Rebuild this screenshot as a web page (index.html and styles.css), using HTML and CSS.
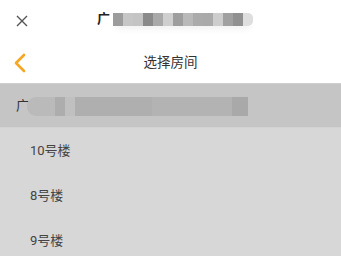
FILE: index.html
```html
<!DOCTYPE html>
<html>
<head>
<meta charset="utf-8">
<link rel="stylesheet" href="styles.css">
</head>
<body>
<div class="app">
  <header class="topbar">
    <svg class="close" width="12" height="12" viewBox="0 0 12 12"><path d="M1 1L11 11M11 1L1 11" stroke="#555" stroke-width="1.4" fill="none"/></svg>
    <div class="toptitle">
      <span class="ch">广</span>
      <span class="mosaic"><i></i><i></i><i></i><i></i><i></i><i></i><i></i><i></i><i></i><i></i><i></i><i></i><i></i><i></i></span>
    </div>
  </header>
  <nav class="navbar">
    <svg class="back" width="14" height="20" viewBox="0 0 14 20"><path d="M11 2L3 10L11 18" stroke="#f5a623" stroke-width="2.6" fill="none" stroke-linecap="round" stroke-linejoin="round"/></svg>
    <div class="navtitle">选择房间</div>
  </nav>
  <div class="selected">
    <span class="ch2">广</span>
    <span class="blur"><i class="b1"></i><i class="b2"></i><i class="b3"></i><i class="b4"></i><i class="b5"></i><i class="b6"></i></span>
  </div>
  <ul class="list">
    <li>10号楼</li>
    <li>8号楼</li>
    <li>9号楼</li>
  </ul>
</div>
</body>
</html>
```
FILE: styles.css
```css
html, body {
  margin: 0;
  padding: 0;
  background: #d7d7d7;
  font-family: Roboto, "Noto Sans CJK SC", sans-serif;
}
.app {
  width: 341px;
  height: 256px;
  overflow: hidden;
  display: flex;
  flex-direction: column;
}
.app > * {
  flex-shrink: 0;
}
.topbar {
  height: 40px;
  background: #fff;
  display: flex;
  align-items: center;
  position: relative;
}
.close {
  margin-left: 16px;
  margin-top: 2px;
}
.toptitle {
  margin-left: 69px;
  display: flex;
  align-items: flex-start;
  height: 24px;
  margin-top: 6px;
}
.ch {
  font-size: 13px;
  line-height: 16px;
  color: #222;
  font-weight: bold;
  width: 16px;
}
.mosaic {
  display: flex;
  height: 13px;
  margin-top: 2px;
  box-shadow: 0 6px 6px -3px rgba(0,0,0,0.06);
}
.mosaic i {
  display: block;
  width: 10px;
  height: 13px;
  background: #c8c8c8;
}
.mosaic i:nth-child(1) { background: #9c9c9c; }
.mosaic i:nth-child(2) { background: #c6c6c6; }
.mosaic i:nth-child(3) { background: #c4c4c4; }
.mosaic i:nth-child(4) { background: #8a8a8a; }
.mosaic i:nth-child(5) { background: #a9a9a9; }
.mosaic i:nth-child(6) { background: #cfcfcf; }
.mosaic i:nth-child(7) { background: #9e9e9e; }
.mosaic i:nth-child(8) { background: #b9b9b9; }
.mosaic i:nth-child(9) { background: #ababab; }
.mosaic i:nth-child(10) { background: #aaaaaa; }
.mosaic i:nth-child(11) { background: #cdcdcd; }
.mosaic i:nth-child(12) { background: #a0a0a0; }
.mosaic i:nth-child(13) { background: #909090; }
.mosaic i:nth-child(14) { background: #dedede; border-radius: 0 5px 5px 0; }
.navbar {
  height: 43px;
  background: #fff;
  border-bottom: 1px solid #cfcfcf;
  display: flex;
  align-items: center;
  position: relative;
}
.back {
  margin-left: 13px;
  margin-top: 2px;
}
.navtitle {
  position: absolute;
  left: 0;
  right: 0;
  text-align: center;
  font-size: 13.5px;
  color: #333;
  top: 12px;
  line-height: 20px;
}
.selected {
  height: 43px;
  background: #c5c5c5;
  border-bottom: 1px solid #d2d2d2;
  display: flex;
  align-items: center;
  padding-left: 16px;
}
.ch2 {
  font-size: 13px;
  color: #333;
  width: 11px;
  margin-top: -2px;
}
.blur {
  display: flex;
  height: 19px;
  margin-top: 2px;
}
.blur i {
  display: block;
  height: 19px;
}
.b1 { width: 28px; background: #bababa; border-radius: 9px 0 0 9px; }
.b2 { width: 10px; background: #adadad; }
.b3 { width: 10px; background: #c0c0c0; }
.b4 { width: 77px; background: #afafaf; }
.b5 { width: 80px; background: #b3b3b3; }
.b6 { width: 16px; background: #a9a9a9; }
.list {
  list-style: none;
  margin: 0;
  padding: 0;
  background: #d7d7d7;
}
.list li {
  height: 45px;
  line-height: 45px;
  padding-left: 30px;
  font-size: 13px;
  color: #444;
}
```
